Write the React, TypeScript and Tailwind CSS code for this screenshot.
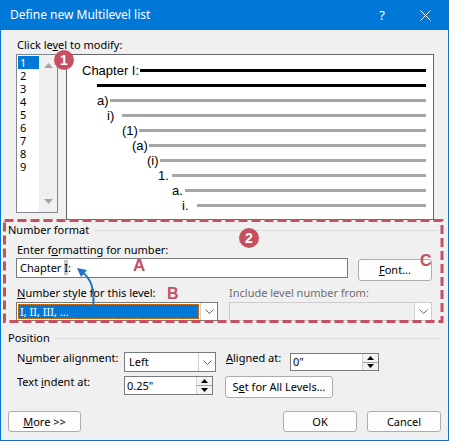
import React from "react";

const RED = "#c6505f";

function Chevron() {
  return (
    <svg width="9" height="5" viewBox="0 0 9 5" className="block">
      <path d="M0.5 0.5 L4.5 4.5 L8.5 0.5" fill="none" stroke="#606060" strokeWidth="1" />
    </svg>
  );
}

function Spinner() {
  return (
    <div className="flex flex-col w-[16px] h-full border-l border-[#d0d0d0] bg-[#f4f4f4]">
      <div className="flex-1 flex items-center justify-center border-b border-[#a0a0a0]">
        <svg width="7" height="4" viewBox="0 0 7 4"><path d="M0 4 L3.5 0 L7 4 Z" fill="#000" /></svg>
      </div>
      <div className="flex-1 flex items-center justify-center">
        <svg width="7" height="4" viewBox="0 0 7 4"><path d="M0 0 L3.5 4 L7 0 Z" fill="#000" /></svg>
      </div>
    </div>
  );
}

function Btn({ children, className = "" }: { children: React.ReactNode; className?: string }) {
  return (
    <div
      className={
        "flex items-center justify-center whitespace-nowrap rounded-[3px] border border-[#adadad] bg-[#fdfdfd] " +
        className
      }
    >
      {children}
    </div>
  );
}

const levels = ["a)", "i)", "(1)", "(a)", "(i)", "1.", "a.", "i."];

// x offset of each label from the preview's inner edge (67), and the gap up to its line
const levelPad = ["pl-[30px]", "pl-[40px]", "pl-[55px]", "pl-[65px]", "pl-[80px]", "pl-[91px]", "pl-[105px]", "pl-[115px]"];
const levelW = ["w-[13px]", "w-[15px]", "w-[17px]", "w-[17px]", "w-[13px]", "w-[14px]", "w-[13px]", "w-[15px]"];

export default function App() {
  return (
    <div className="relative w-[449px] h-[441px] overflow-hidden whitespace-nowrap bg-[#f0f0f0] border-x border-b border-[#0078d7] font-['Noto_Sans',sans-serif] text-[11px] leading-[16px] text-black">
      {/* title bar */}
      <div className="flex items-center h-[30px] bg-[#0078d7] text-white text-[12px] pl-[9px]">
        <span className="flex-1">Define new Multilevel list</span>
        <span className="w-[20px] text-center text-[13px] mr-[28px]">?</span>
        <svg width="11" height="11" viewBox="0 0 11 11" className="mr-[17px]">
          <path d="M0.5 0.5 L10.5 10.5 M10.5 0.5 L0.5 10.5" stroke="#fff" strokeWidth="1" />
        </svg>
      </div>

      <div className="pl-[16px] pt-[7px]">
        Click le<span className="underline">v</span>el to modify:
      </div>

      <div className="flex items-start pl-[15px] mt-[1px]">
        {/* level list */}
        <div className="flex w-[42px] h-[159px] border border-[#828790] bg-white">
          <div className="w-[22px] pt-[1px] pl-[1px]">
            {["1", "2", "3", "4", "5", "6", "7", "8", "9"].map((n, i) => (
              <div
                key={n}
                className={
                  "h-[13px] leading-[13px] pl-[2px] " + (i === 0 ? "bg-[#0078d7] text-white" : "")
                }
              >
                {n}
              </div>
            ))}
          </div>
          <div className="flex-1 flex flex-col items-center justify-between bg-[#f0f0f0] py-[8px]">
            <svg width="9" height="5" viewBox="0 0 9 5"><path d="M0 5 L4.5 0 L9 5 Z" fill="#a3a3a3" /></svg>
            <svg width="9" height="5" viewBox="0 0 9 5"><path d="M0 0 L4.5 5 L9 0 Z" fill="#a3a3a3" /></svg>
          </div>
        </div>

        {/* preview */}
        <div className="ml-[8px] w-[368px] h-[166px] border border-[#646464] bg-white pt-[8px] pr-[7px] font-['Liberation_Sans',sans-serif] text-[13px]">
          <div className="flex items-center h-[15px] pl-[15px]">
            <span className="w-[58px]">Chapter I:</span>
            <div className="flex-1 h-[3px] bg-black" />
          </div>
          <div className="flex items-center h-[15px] pl-[30px]">
            <div className="flex-1 h-[3px] bg-black" />
          </div>
          {levels.map((l, i) => (
            <div key={i} className={"flex items-center h-[15px] " + levelPad[i]}>
              <span className={levelW[i]}>{l}</span>
              <div className="flex-1 h-[3px] bg-[#a6a6a6]" />
            </div>
          ))}
        </div>
      </div>

      {/* number format */}
      <div className="flex items-center mt-[2px] pl-[7px] pr-[10px]">
        <span>Number format</span>
        <div className="flex-1 ml-[5px] h-px bg-[#dcdcdc]" />
      </div>
      <div className="pl-[16px] mt-[4px]">
        Enter f<span className="underline">o</span>rmatting for number:
      </div>
      <div className="flex items-start pl-[15px]">
        <div className="w-[332px] h-[20px] border border-[#7a7a7a] bg-white pl-[3px] leading-[18px]">
          Chapter <span className="bg-[#c8c8c8]">I</span>:
        </div>
        <Btn className="ml-[10px] mt-[1px] w-[74px] h-[22px]">
          <span>
            <span className="underline">F</span>ont...
          </span>
        </Btn>
      </div>
      <div className="flex mt-[4px] pl-[15px]">
        <div className="w-[202px]">
          <div className="pl-[1px]">
            <span className="underline">N</span>umber style for this level:
          </div>
          <div className="flex mt-[1px] h-[19px] border border-[#7a7a7a] bg-white">
            <div className="flex-1 m-[1px] bg-[#0078d7] text-white leading-[15px] pl-[2px] outline-1 outline-dotted outline-[#e08020] -outline-offset-1">
              I, II, III, ...
            </div>
            <div className="w-[17px] flex items-center justify-center border-l border-[#d0d0d0]">
              <Chevron />
            </div>
          </div>
        </div>
        <div className="ml-[11px] w-[203px]">
          <div className="text-[#6d6d6d]">Include level number from:</div>
          <div className="flex mt-[1px] h-[19px] border border-[#cccccc] bg-[#f0f0f0]">
            <div className="flex-1" />
            <div className="w-[17px] flex items-center justify-center border-l border-[#d0d0d0] bg-white">
              <Chevron />
            </div>
          </div>
        </div>
      </div>

      {/* position */}
      <div className="flex items-center mt-[9px] pl-[7px] pr-[8px]">
        <span>Position</span>
        <div className="flex-1 ml-[5px] h-px bg-[#dcdcdc]" />
      </div>
      <div className="flex items-start mt-[6px] pl-[16px]">
        <div className="w-[107px] -mt-[2px]">
          N<span className="underline">u</span>mber alignment:
        </div>
        <div className="flex w-[92px] h-[20px] border border-[#7a7a7a] bg-white">
          <div className="flex-1 pl-[4px] leading-[18px]">Left</div>
          <div className="w-[17px] flex items-center justify-center border-l border-[#d0d0d0]">
            <Chevron />
          </div>
        </div>
        <div className="ml-[10px] w-[64px] -mt-[2px]">
          <span className="underline">A</span>ligned at:
        </div>
        <div className="flex mt-[1px] w-[89px] h-[18px] border border-[#7a7a7a] bg-white">
          <div className="flex-1 pl-[2px] leading-[16px]">0"</div>
          <Spinner />
        </div>
      </div>
      <div className="flex items-start mt-[4px] pl-[16px]">
        <div className="w-[107px] -mt-[2px]">
          Text <span className="underline">i</span>ndent at:
        </div>
        <div className="flex w-[89px] h-[19px] border border-[#7a7a7a] bg-white">
          <div className="flex-1 pl-[2px] leading-[17px]">0.25"</div>
          <Spinner />
        </div>
        <Btn className="ml-[12px] w-[108px] h-[22px]">
          <span>
            S<span className="underline">e</span>t for All Levels...
          </span>
        </Btn>
      </div>

      <div className="flex mt-[13px] pl-[7px]">
        <Btn className="w-[73px] h-[21px]">
          <span>
            <span className="underline">M</span>ore &gt;&gt;
          </span>
        </Btn>
        <Btn className="ml-[202px] w-[74px] h-[21px] border-[#0078d7]">OK</Btn>
        <Btn className="ml-[10px] w-[74px] h-[21px]">Cancel</Btn>
      </div>

      {/* annotations */}
      <svg className="absolute left-0 top-0 pointer-events-none" width="449" height="441">
        <rect
          x="3.5"
          y="220.5"
          width="437.5"
          height="101"
          fill="none"
          stroke={RED}
          strokeWidth="3"
          strokeDasharray="9 4"
        />
        <path d="M92 307 C 94 290, 91 279, 81 272" fill="none" stroke="#1f74c4" strokeWidth="2" />
        <path d="M76 268 L86 270 L80 277 Z" fill="#1f74c4" />
      </svg>
      <div
        className="absolute left-[53px] top-[50px] w-[20px] h-[20px] rounded-full flex items-center justify-center text-white font-bold text-[14px] font-['Liberation_Sans',sans-serif]"
        style={{ backgroundColor: RED }}
      >
        1
      </div>
      <div
        className="absolute left-[238px] top-[228px] w-[20px] h-[20px] rounded-full flex items-center justify-center text-white font-bold text-[14px] font-['Liberation_Sans',sans-serif]"
        style={{ backgroundColor: RED }}
      >
        2
      </div>
      <div className="absolute left-[132px] top-[256px] text-[17px] leading-[20px] font-bold text-[#c6505f] font-['Liberation_Sans',sans-serif]">
        A
      </div>
      <div className="absolute left-[166px] top-[284px] text-[16px] leading-[20px] font-bold text-[#c6505f] font-['Liberation_Sans',sans-serif]">
        B
      </div>
      <div className="absolute left-[419px] top-[251px] text-[16px] leading-[20px] font-bold text-[#c6505f] font-['Liberation_Sans',sans-serif]">
        C
      </div>
    </div>
  );
}
